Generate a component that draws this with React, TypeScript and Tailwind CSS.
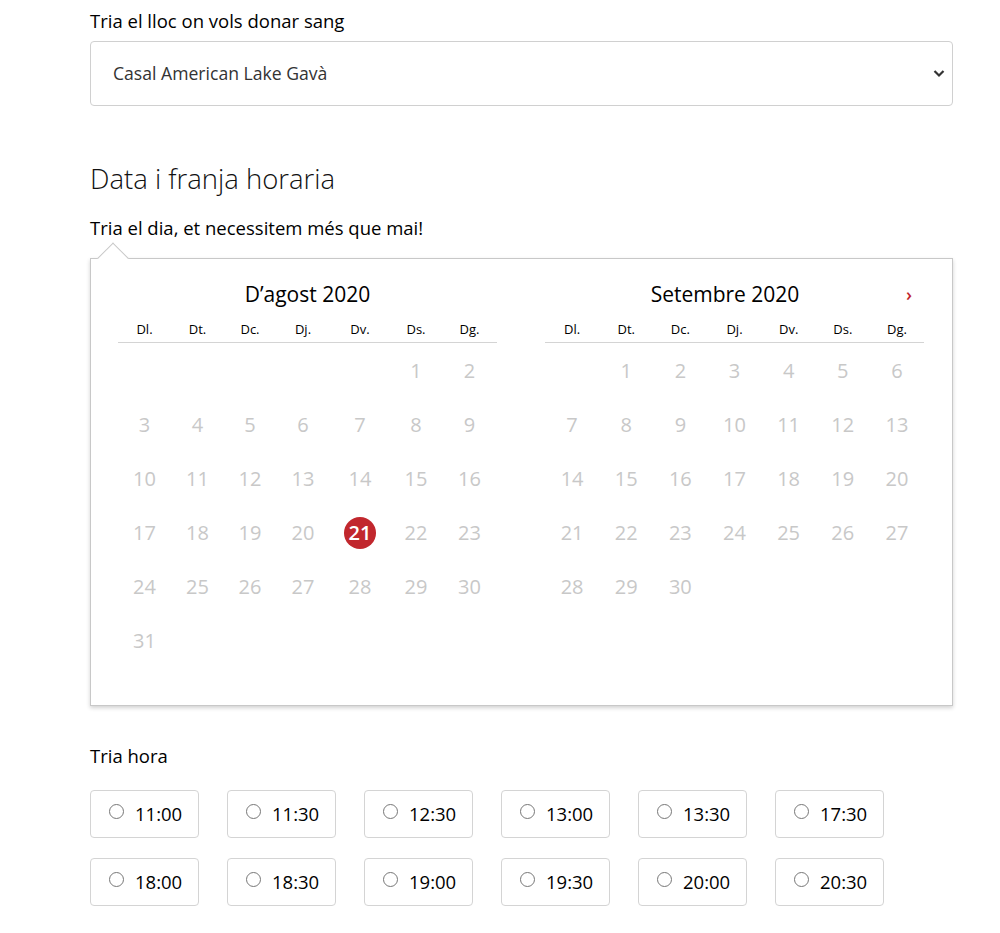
import React from "react";

const font = { fontFamily: '"Open Sans", "Noto Sans", sans-serif' };

const weekdays = ["Dl.", "Dt.", "Dc.", "Dj.", "Dv.", "Ds.", "Dg."];

type Month = { title: string; offset: number; days: number; next?: boolean; cols: string };

const months: Month[] = [
  {
    title: "D’agost 2020",
    offset: 5,
    days: 31,
    cols: "grid-cols-[53px_53px_52px_54px_60px_52px_55px]",
  },
  {
    title: "Setembre 2020",
    offset: 1,
    days: 30,
    next: true,
    cols: "grid-cols-7",
  },
];

const SELECTED = 21;

function MonthGrid({ m, isFirst }: { m: Month; isFirst: boolean }) {
  const cells: (number | null)[] = [];
  for (let i = 0; i < m.offset; i++) cells.push(null);
  for (let d = 1; d <= m.days; d++) cells.push(d);
  return (
    <div className="w-[379px]">
      <div
        className={
          "relative h-[28px] flex items-center justify-center text-[21px] text-black leading-[28px] " +
          (m.next ? "pr-[19px]" : "")
        }
      >
        {m.title}
        {m.next && (
          <span className="absolute right-[12px] top-[0px] text-[#c1272d] text-[18px] font-semibold leading-[28px]">
            ›
          </span>
        )}
      </div>
      <div className={"mt-[12px] grid border-b border-[#d4d4d4] pb-[4px] " + m.cols}>
        {weekdays.map((w) => (
          <div key={w} className="text-center text-[13px] leading-[18px] text-black">
            {w}
          </div>
        ))}
      </div>
      <div className={"grid mt-[1px] " + m.cols}>
        {cells.map((d, i) => (
          <div key={i} className="h-[54px] flex items-center justify-center">
            {d !== null &&
              (isFirst && d === SELECTED ? (
                <span className="w-[32px] h-[32px] rounded-full bg-[#c1272d] text-white flex items-center justify-center text-[20px] font-semibold">
                  {d}
                </span>
              ) : (
                <span className="text-[20px] text-[#c8c8c8]">{d}</span>
              ))}
          </div>
        ))}
      </div>
    </div>
  );
}

const times = [
  ["11:00", "11:30", "12:30", "13:00", "13:30", "17:30"],
  ["18:00", "18:30", "19:00", "19:30", "20:00", "20:30"],
];

export default function App() {
  return (
    <div className="min-h-[933px] bg-white" style={font}>
      <div className="ml-[90px] w-[863px] pt-[8px]">
        <label className="block text-[18.5px] leading-[26px] text-black">
          Tria el lloc on vols donar sang
        </label>
        <div className="relative mt-[7px]">
          <select
            className="appearance-none w-full h-[65px] border border-[#d0d0d0] rounded-[4px] pl-[22px] text-[17.6px] text-[#333] bg-white outline-none"
            style={font}
            defaultValue="gava"
          >
            <option value="gava">Casal American Lake Gavà</option>
          </select>
          <svg
            className="absolute right-[8px] top-[28px] pointer-events-none"
            width="12"
            height="9"
            viewBox="0 0 12 9"
          >
            <path d="M1.5 2 L6 6.5 L10.5 2" fill="none" stroke="#333" strokeWidth="2.2" />
          </svg>
        </div>

        <h2 className="mt-[56px] text-[27.5px] leading-[34px] font-light text-[#111]">
          Data i franja horaria
        </h2>
        <p className="mt-[19px] text-[18.5px] leading-[26px] text-black">
          Tria el dia, et necessitem més que mai!
        </p>

        <div className="relative mt-[17px] border border-[#c8c8c8] bg-white shadow-[0_2px_4px_rgba(0,0,0,0.18)] pt-[21px] pb-[37px] pl-[27px] pr-[28px]">
          <div className="absolute left-[11px] -top-[12px] w-[22px] h-[22px] rotate-45 bg-white border-l border-t border-[#c8c8c8]" />
          <div className="relative flex gap-[48px]">
            {months.map((m, i) => (
              <MonthGrid key={m.title} m={m} isFirst={i === 0} />
            ))}
          </div>
        </div>

        <p className="mt-[37px] text-[18.5px] leading-[26px] text-black">Tria hora</p>

        <div className="mt-[21px] flex flex-col gap-[20px]">
          {times.map((row, r) => (
            <div key={r} className="flex gap-[28px]">
              {row.map((t) => (
                <label
                  key={t}
                  className="w-[109px] h-[48px] border border-[#d4d4d4] rounded-[4px] flex items-center pl-[18px] gap-[11px] text-[18.5px] text-black"
                >
                  <span className="w-[15px] h-[15px] rounded-full border border-[#777] bg-white -mt-[5px]" />
                  <span className="leading-[26px]">{t}</span>
                </label>
              ))}
            </div>
          ))}
        </div>
      </div>
    </div>
  );
}
